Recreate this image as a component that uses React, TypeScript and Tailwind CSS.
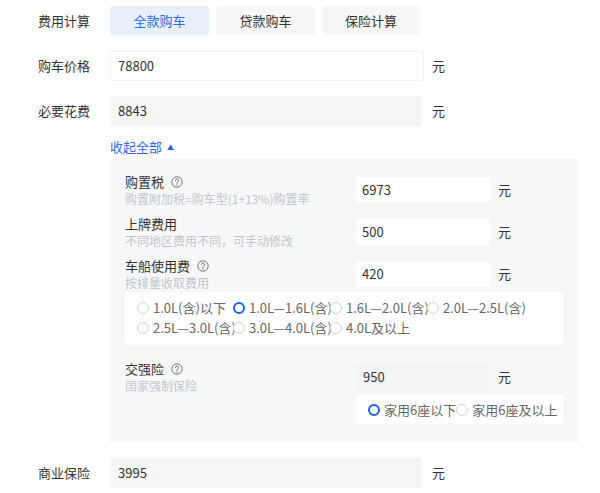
import React from "react";

function Help() {
  return (
    <svg width="12" height="12" viewBox="0 0 12 12" className="ml-[7px] inline-block">
      <circle cx="6" cy="6" r="5.2" fill="none" stroke="#666" strokeWidth="0.9" />
      <path d="M4.4 4.7a1.6 1.6 0 1 1 2.3 1.4c-.5.3-.7.5-.7 1v.4" fill="none" stroke="#666" strokeWidth="0.9" strokeLinecap="round" />
      <circle cx="6" cy="8.9" r="0.6" fill="#666" />
    </svg>
  );
}

function Radio({ label, checked, w }: { label: string; checked?: boolean; w?: string }) {
  return (
    <div className={`flex items-center whitespace-nowrap ${w ?? ""}`}>
      <span
        className={
          checked
            ? "h-[12px] w-[12px] shrink-0 rounded-full border-[2.5px] border-[#1d5fe6] bg-white"
            : "h-[12px] w-[12px] shrink-0 rounded-full border border-[#d0d3d9] bg-white"
        }
      />
      <span className="ml-[4px] text-[13px] text-[#666]">{label}</span>
    </div>
  );
}

function SubRow({ title, desc, value, help }: { title: string; desc: string; value: string; help?: boolean }) {
  return (
    <div className="flex items-center">
      <div className="w-[231px]">
        <div className="flex h-[18px] items-center text-[13px] leading-[18px] text-[#333]">
          {title}
          {help && <Help />}
        </div>
        <div className="h-[16px] text-[12px] leading-[16px] text-[#c3c6cc]">{desc}</div>
      </div>
      <div className="flex h-[26px] w-[134px] items-center rounded-[2px] bg-white pl-[6px] text-[13px] text-[#333]">
        {value}
      </div>
      <span className="ml-2 text-[13px] text-[#333]">元</span>
    </div>
  );
}

function Label({ children }: { children: React.ReactNode }) {
  return <div className="w-[72px] shrink-0 text-[13px] text-[#333]">{children}</div>;
}

export default function App() {
  return (
    <div
      className="h-[493px] w-[600px] bg-white pl-[38px] pt-[6px]"
      style={{ fontFamily: '"Noto Sans CJK SC", "Noto Sans", sans-serif' }}
    >
      <div className="flex items-center">
        <Label>费用计算</Label>
        <div className="flex gap-[7px]">
          <div className="flex h-[29px] w-[99px] items-center justify-center rounded-[3px] bg-[#e8f0fd] text-[13px] text-[#2e6ae6]">
            全款购车
          </div>
          <div className="flex h-[29px] w-[99px] items-center justify-center rounded-[3px] bg-[#f6f6f7] text-[13px] text-[#333]">
            贷款购车
          </div>
          <div className="flex h-[29px] w-[98px] items-center justify-center rounded-[3px] bg-[#f6f6f7] text-[13px] text-[#333]">
            保险计算
          </div>
        </div>
      </div>

      <div className="mt-[16px] flex items-center">
        <Label>购车价格</Label>
        <div className="flex h-[30px] w-[314px] items-center rounded-[2px] border border-[#f1f1f1] bg-white pl-[7px] text-[13px] text-[#333]">
          78800
        </div>
        <span className="ml-2 text-[13px] text-[#333]">元</span>
      </div>

      <div className="mt-[15px] flex items-center">
        <Label>必要花费</Label>
        <div className="flex h-[30px] w-[312px] items-center rounded-[2px] bg-[#f6f6f7] pl-[8px] text-[13px] text-[#333]">
          8843
        </div>
        <span className="ml-[10px] text-[13px] text-[#333]">元</span>
      </div>

      <div className="ml-[72px] mt-[12px] flex items-center text-[13px] leading-[18px] text-[#2e6ae6]">
        收起全部
        <span className="ml-[5px] text-[7px]">▲</span>
      </div>

      <div className="ml-[72px] mt-[3px] w-[468px] rounded-[2px] bg-[#f6f7f9] px-[15px] pb-[18px] pt-[14px]">
        <div className="flex flex-col gap-[8px]">
          <SubRow title="购置税" desc="购置附加税=购车型(1+13%)购置率" value="6973" help />
          <SubRow title="上牌费用" desc="不同地区费用不同，可手动修改" value="500" />
          <SubRow title="车船使用费" desc="按排量收取费用" value="420" help />
        </div>
        <div className="mt-[1px] rounded-[2px] bg-white pb-[7px] pl-[12px] pt-[6px] leading-[20px]">
          <div className="flex">
            <Radio label="1.0L(含)以下" w="w-[96px]" />
            <Radio label="1.0L—1.6L(含)" checked w="w-[97px]" />
            <Radio label="1.6L—2.0L(含)" w="w-[97px]" />
            <Radio label="2.0L—2.5L(含)" />
          </div>
          <div className="flex">
            <Radio label="2.5L—3.0L(含)" w="w-[96px]" />
            <Radio label="3.0L—4.0L(含)" w="w-[97px]" />
            <Radio label="4.0L及以上" />
          </div>
        </div>

        <div className="mt-[15px] flex items-start">
          <div className="w-[231px]">
            <div className="flex h-[18px] items-center text-[13px] leading-[18px] text-[#333]">
              交强险
              <Help />
            </div>
            <div className="h-[16px] text-[12px] leading-[16px] text-[#c3c6cc]">国家强制保险</div>
          </div>
          <div>
            <div className="mt-[3px] flex items-center">
              <div className="flex h-[28px] w-[132px] items-center rounded-[2px] bg-[#f3f4f6] pl-[7px] text-[13px] text-[#333]">
                950
              </div>
              <span className="ml-[10px] text-[13px] text-[#333]">元</span>
            </div>
            <div className="mt-[4px] flex h-[29px] w-[207px] items-center rounded-[2px] bg-white pl-[12px]">
              <Radio label="家用6座以下" checked />
              <Radio label="家用6座及以上" />
            </div>
          </div>
        </div>
      </div>

      <div className="mt-[16px] flex items-center">
        <Label>商业保险</Label>
        <div className="flex h-[30px] w-[312px] items-center rounded-[2px] bg-[#f6f6f7] pl-[8px] text-[13px] text-[#333]">
          3995
        </div>
        <span className="ml-[10px] text-[13px] text-[#333]">元</span>
      </div>
    </div>
  );
}
